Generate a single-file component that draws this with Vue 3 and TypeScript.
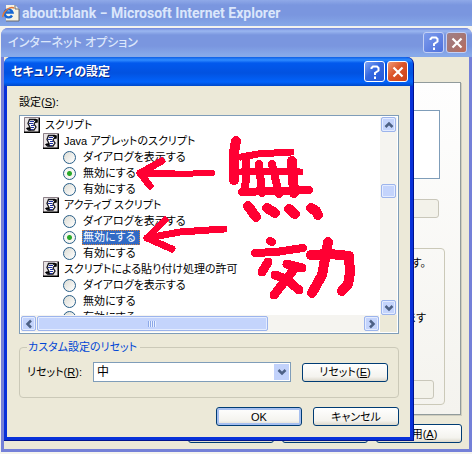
<script setup lang="ts">
import { ref } from 'vue'

interface Choice { value: string; text: string }
interface Group { id: string; title: string; choices: Choice[] }

const choices: Choice[] = [
  { value: 'prompt', text: 'ダイアログを表示する' },
  { value: 'disable', text: '無効にする' },
  { value: 'enable', text: '有効にする' },
]

const groups: Group[] = [
  { id: 'applet', title: 'Java アプレットのスクリプト', choices },
  { id: 'active', title: 'アクティブ スクリプト', choices },
  { id: 'paste', title: 'スクリプトによる貼り付け処理の許可', choices },
]

const picked = ref<Record<string, string>>({ applet: 'disable', active: 'disable', paste: '' })
const focused = ref('active')
const level = ref('medium')

function pick(group: string, value: string): void {
  picked.value[group] = value
  focused.value = group
}
</script>

<template>
  <div class="desktop">
    <svg class="defs" width="0" height="0" aria-hidden="true">
      <symbol id="script" viewBox="0 0 16 16">
        <path d="M0 0h16v16H0z" fill="#e9e4e4" />
        <path d="M.5 16V.5H16" fill="none" stroke="#8c8088" />
        <path d="M15.250 1v14.250H0" fill="none" stroke="#000" stroke-width="1.500" />
        <path d="M5.500 2.500h6l1.500 1.500-2 1.500-1 1.500 2 3-2 3H4.500L3 11.500l3-1-2-4z" fill="#fff" stroke="#14141c" stroke-width="1.300" />
        <path d="M6 4.500h4M5 6.500h4M7 8.500h3M7 10.500h3M6 12.500h3" stroke="#1c2c9c" />
        <path d="M10 3h3v2h-2M3 11.500h3v2" fill="none" stroke="#000" stroke-width="1.300" />
      </symbol>
      <symbol id="chevron" viewBox="0 0 10 10">
        <path d="M1.500 3 5 6.500 8.500 3" fill="none" stroke="#4d6185" stroke-width="2.500" />
      </symbol>
      <symbol id="cross" viewBox="0 0 12 12">
        <path d="M1.500 1.500l9 9M10.500 1.500l-9 9" stroke="#fff" stroke-width="2.200" />
      </symbol>
      <symbol id="help" viewBox="0 0 12 14">
        <path d="M2.500 4V3l1.500-1.500h4L9.500 3v2.500L6 8v2" fill="none" stroke="#fff" stroke-width="2" />
        <path d="M5 11.500h2V14H5z" fill="#fff" />
      </symbol>
    </svg>

    <header class="browser-bar">
      <svg class="page-icon" viewBox="0 0 18 18" aria-hidden="true">
        <path d="M4 1h9l4 4v12H4z" fill="#f7f3e4" />
        <path d="M13 1v4h4v12H4" fill="none" stroke="#6c6c70" />
        <path d="M10 11.500a4 4 0 1 1 .5-3H4" fill="none" stroke="#1767d2" stroke-width="2.400" />
        <path d="M1 13C0 9 7 2 12 4" fill="none" stroke="#e07838" stroke-width="1.500" />
      </svg>
      <span>about:blank − Microsoft Internet Explorer</span>
    </header>

    <section class="window options">
      <header class="title-bar faded">
        <h2>インターネット オプション</h2>
        <button type="button" class="cap help" aria-label="ヘルプ"><svg><use href="#help" /></svg></button>
        <button type="button" class="cap close" aria-label="閉じる"><svg><use href="#cross" /></svg></button>
      </header>
      <div class="options-body">
        <div class="sheet">
          <div class="zones"></div>
          <div class="row-end"><button type="button" class="off" disabled></button></div>
          <div class="frame">
            <p>ます。</p>
            <p>ます</p>
            <button type="button" class="off" disabled></button>
          </div>
        </div>
        <div class="actions">
          <button type="button" class="btn">OK</button>
          <button type="button" class="btn">キャンセル</button>
          <button type="button" class="btn">適用(<u>A</u>)</button>
        </div>
      </div>
    </section>

    <section class="window security">
      <header class="title-bar">
        <h1>セキュリティの設定</h1>
        <button type="button" class="cap help" aria-label="ヘルプ"><svg><use href="#help" /></svg></button>
        <button type="button" class="cap close" aria-label="閉じる"><svg><use href="#cross" /></svg></button>
      </header>
      <div class="security-body">
        <div id="list-label" class="list-label">設定(<u>S</u>):</div>
        <div class="list" role="group" aria-labelledby="list-label">
          <div class="tree">
            <div class="row root"><svg class="node"><use href="#script" /></svg>スクリプト</div>
            <template v-for="g in groups" :key="g.id">
              <div class="row branch"><svg class="node"><use href="#script" /></svg>{{ g.title }}</div>
              <label v-for="c in g.choices" :key="c.value" class="row leaf">
                <input
                  type="radio"
                  :name="g.id"
                  :value="c.value"
                  :checked="picked[g.id] === c.value"
                  @change="pick(g.id, c.value)"
                />
                <span :class="{ marked: focused === g.id && picked[g.id] === c.value }">{{ c.text }}</span>
              </label>
            </template>
          </div>
          <div class="scroll vertical">
            <button type="button" class="arrow up" aria-label="上へ"><svg><use href="#chevron" /></svg></button>
            <i class="before"></i>
            <i class="thumb"></i>
            <i class="after"></i>
            <button type="button" class="arrow down" aria-label="下へ"><svg><use href="#chevron" /></svg></button>
          </div>
          <div class="scroll horizontal">
            <button type="button" class="arrow left" aria-label="左へ"><svg><use href="#chevron" /></svg></button>
            <i class="thumb"><b></b></i>
            <i class="after"></i>
            <button type="button" class="arrow right" aria-label="右へ"><svg><use href="#chevron" /></svg></button>
          </div>
        </div>

        <fieldset class="reset">
          <legend>カスタム設定のリセット</legend>
          <div class="reset-row">
            <label for="level">リセット(<u>R</u>):</label>
            <div class="combo">
              <select id="level" v-model="level">
                <option value="high">高</option>
                <option value="medium">中</option>
                <option value="low">低</option>
              </select>
              <span class="drop"><svg><use href="#chevron" /></svg></span>
            </div>
            <button type="button" class="btn">リセット(<u>E</u>)</button>
          </div>
        </fieldset>

        <div class="actions">
          <button type="button" class="btn default">OK</button>
          <button type="button" class="btn">キャンセル</button>
        </div>
      </div>
    </section>

    <svg class="pen" viewBox="130 130 240 175" aria-hidden="true">
      <g stroke-width="7">
        <path d="M140 173 175 174" />
        <path d="M175 174 212 173" stroke-width="6" />
        <path d="M162 161 140 173 150 186" />
        <path d="M147 238 180 232 224 229" />
        <path d="M165 220 147 238 172 249" />
      </g>
      <g stroke-width="10">
        <path d="M236 141 234 152 234 180" />
        <path d="M241 157 258 154 291 152" stroke-width="7" />
        <path d="M241 172 262 171 300 172" stroke-width="7" />
        <path d="M242 192 270 191 309 190" stroke-width="8" />
        <path d="M246 160 246 175 245 192M259 164 262 193M272 164 279 194" stroke-width="8" />
        <path d="M292 161 294 193" />
        <path d="M248 206 256 217M267 208 275 213M289 209 295 214M311 208 316 211 318 215" />
        <path d="M270 241 272 242M255 253 276 252 303 248" stroke-width="8" />
        <path d="M268 262 262 272M287 264 302 268M295 268 274 295M275 275 286 279 299 290" stroke-width="9" />
        <path d="M311 255 330 254 349 256 350 273 348 284 342 291M328 242 326 254 322 275 312 293" />
      </g>
    </svg>
  </div>
</template>

<style>
body {
  margin: 0;
}
</style>

<style scoped>
.desktop {
  position: relative;
  min-height: 100vh;
  overflow: hidden;
  background: #f4f3ee;
  color: #000;
  font-family: "Liberation Sans", "Noto Sans CJK JP", sans-serif;
  font-size: 11px;
  line-height: 16px;
  font-feature-settings: "palt";
}
.desktop * {
  box-sizing: border-box;
}
.defs {
  position: absolute;
}
button,
select {
  font: inherit;
  font-feature-settings: inherit;
  color: inherit;
  padding: 0;
  margin: 0;
}
svg {
  display: block;
}
.browser-bar {
  display: flex;
  align-items: center;
  gap: 2px;
  height: 26px;
  padding-left: 2px;
  background: linear-gradient(#8fa9e8, #7a96df 5px, #7a96df 15px, #86a8e8);
  color: #dbe6fb;
  font-family: Roboto, sans-serif;
  font-size: 14px;
  font-weight: bold;
  white-space: nowrap;
}
.page-icon {
  width: 18px;
  height: 18px;
}
.window {
  position: absolute;
  display: flex;
  flex-direction: column;
  border-radius: 7px 7px 0 0;
}
.options {
  inset: 28px 0 2px 1px;
  padding: 0 3px 3px;
  background: #7480d8;
}
.security {
  top: 57px;
  left: 4px;
  right: 58px;
  padding: 0 3px 3px;
  background: #0831d9;
  border-right: 1px solid #00138c;
  border-bottom: 1px solid #00138c;
}
.title-bar {
  display: flex;
  align-items: center;
  gap: 2px;
  height: 29px;
  margin: 0 -3px;
  padding: 0 5px 0 7px;
  border-radius: 7px 7px 0 0;
  background: linear-gradient(#0d5fe6, #2f8bff 3px, #0259ee 6px, #0252e0 16px, #0263fb 25px, #0048c8);
  color: #fff;
}
.faded {
  background: linear-gradient(#7088dc, #9ab6f0 3px, #7a96df 7px, #7a96df 18px, #87a9e9 27px);
  color: #dbe6fb;
}
.title-bar h1,
.title-bar h2 {
  flex: 1;
  margin: 0;
  font-size: 12px;
  line-height: 16px;
  font-weight: bold;
}
.title-bar h1 {
  text-shadow: 1px 1px #0a2a90;
}
.title-bar h2 {
  font-weight: 500;
}
.cap {
  display: grid;
  place-items: center;
  width: 21px;
  height: 21px;
  border: 1px solid #fff;
  border-radius: 3px;
}
.cap svg {
  width: 12px;
  height: 12px;
}
.cap.help svg {
  height: 14px;
}
.help {
  background: linear-gradient(135deg, #7fa4f4, #3568e0 45%, #2458d8);
}
.close {
  background: linear-gradient(135deg, #ee9a78, #dc5429 45%, #cc4218);
}
.faded .cap {
  border-color: #c3d0f5;
}
.faded .help {
  background: linear-gradient(135deg, #7d9cec, #4e70dc);
}
.faded .close {
  background: linear-gradient(135deg, #a08088, #a87470 60%, #c06a58);
}
.options-body {
  flex: 1;
  display: flex;
  flex-direction: column;
  gap: 9px;
  padding: 25px 8px 6px;
  background: #ece9d8;
}
.sheet {
  flex: 1;
  display: flex;
  flex-direction: column;
  padding: 27px 15px 9px;
  border: 1px solid #919b9c;
  box-shadow: 1px 1px #d0cebf;
  background: linear-gradient(#fefefe, #f4f3ee);
}
.zones {
  height: 69px;
  margin: 0 5px 20px 0;
  border: 1px solid #7f9db9;
  background: #fff;
}
.row-end {
  display: flex;
  justify-content: flex-end;
  padding-right: 6px;
}
.off {
  width: 86px;
  height: 19px;
  border: 1px solid #c9c7ba;
  border-radius: 3px;
  background: #f3f2ea;
}
.frame {
  flex: 1;
  display: flex;
  flex-direction: column;
  align-items: flex-end;
  margin-top: 30px;
  padding: 6px 10px 5px;
  border: 1px solid #cbc9b8;
  border-radius: 4px;
}
.frame p {
  margin: 0 8px 39px 0;
}
.frame .off {
  margin-top: auto;
}
.actions {
  display: flex;
  justify-content: flex-end;
  gap: 11px;
}
.options .actions {
  gap: 8px;
  margin-right: -1px;
}
.btn {
  width: 86px;
  height: 19px;
  border: 1px solid #003c74;
  border-radius: 3px;
  background: linear-gradient(#fff, #f4f3ee 75%, #dcd8cc);
  line-height: 16px;
}
.btn.default {
  box-shadow: inset 0 0 0 2px #a6bff0;
}
.security-body {
  padding: 8px 11px 11px 12px;
  background: #ece9d8;
}
.list-label {
  height: 21px;
}
.list {
  display: grid;
  grid-template: 198px 17px / minmax(0, 1fr) 17px;
  padding: 1px;
  border: 1px solid #7f9db9;
  background: #fff;
}
.tree {
  height: 198px;
  overflow: hidden auto;
  scrollbar-width: none;
}
.row {
  display: flex;
  align-items: center;
  gap: 5px;
  height: 16px;
  white-space: nowrap;
}
.root {
  padding-left: 3px;
}
.branch {
  padding-left: 22px;
}
.leaf {
  gap: 6px;
  padding-left: 42px;
}
.leaf span {
  padding: 0 1px;
  line-height: 15px;
}
.leaf .marked {
  padding-right: 4px;
  outline: 1px dotted #d08040;
  outline-offset: -1px;
  background: #316ac5;
  color: #fff;
}
.node {
  width: 16px;
  height: 16px;
}
.leaf input {
  appearance: none;
  flex: none;
  width: 13px;
  height: 13px;
  margin: 0;
  border: 1px solid #285e88;
  border-radius: 50%;
  background: linear-gradient(135deg, #dcdcd4, #fff);
}
.leaf input:checked {
  background: radial-gradient(circle, #2aa82a 2px, #f6f6f2 3px);
}
.scroll {
  display: flex;
  background: #f5f4f0;
}
.vertical {
  flex-direction: column;
  padding: 0 1px;
}
.horizontal {
  padding: 1px 0;
}
.arrow,
.thumb {
  display: grid;
  place-items: center;
  border: 1px solid #9cb4ec;
  border-radius: 2px;
  box-shadow: inset 0 0 0 1px #e4ecff;
  background: #c4d4fc;
}
.arrow {
  flex: none;
  width: 15px;
  height: 15px;
}
.arrow svg {
  width: 10px;
  height: 10px;
}
.up svg {
  transform: rotate(180deg);
}
.left svg {
  transform: rotate(90deg);
}
.right svg {
  transform: rotate(-90deg);
}
.vertical .before {
  flex: 52;
}
.vertical .thumb {
  height: 14px;
}
.vertical .after {
  flex: 101;
}
.horizontal .thumb {
  flex: 231;
  margin-left: 1px;
}
.horizontal .after {
  flex: 97;
}
.thumb b {
  width: 8px;
  height: 6px;
  background: repeating-linear-gradient(90deg, #8ca8e8 0 1px, #e8f0ff 1px 2px);
}
.horizontal {
  margin-right: 1px;
}
.list::after {
  content: "";
  background: #ece9d8;
}
.reset {
  min-width: 0;
  margin: 5px 0 9px;
  padding: 0 10px 15px 7px;
  border: 1px solid #cbc9b8;
  border-radius: 4px;
}
.reset legend {
  padding: 0 3px 0 1px;
  color: #0046d5;
}
.reset-row {
  display: flex;
  align-items: center;
  padding-top: 7px;
}
.reset-row label {
  flex: none;
  width: 66px;
}
.combo {
  position: relative;
  flex: 1;
  margin-right: 11px;
}
.combo select {
  display: block;
  appearance: none;
  width: 100%;
  height: 20px;
  padding: 0 20px 0 3px;
  border: 1px solid #7f9db9;
  border-radius: 0;
  background: #fff;
  font-size: 12px;
}
.drop {
  position: absolute;
  top: 2px;
  right: 2px;
  bottom: 2px;
  width: 15px;
  display: grid;
  place-items: center;
  background: #c2d2fb;
  pointer-events: none;
}
.drop svg {
  width: 10px;
  height: 10px;
}
.pen {
  position: absolute;
  top: 130px;
  left: 130px;
  width: 240px;
  height: 175px;
  fill: none;
  stroke: #ff0033;
  stroke-linecap: round;
  stroke-linejoin: round;
  shape-rendering: crispEdges;
  pointer-events: none;
}
</style>
